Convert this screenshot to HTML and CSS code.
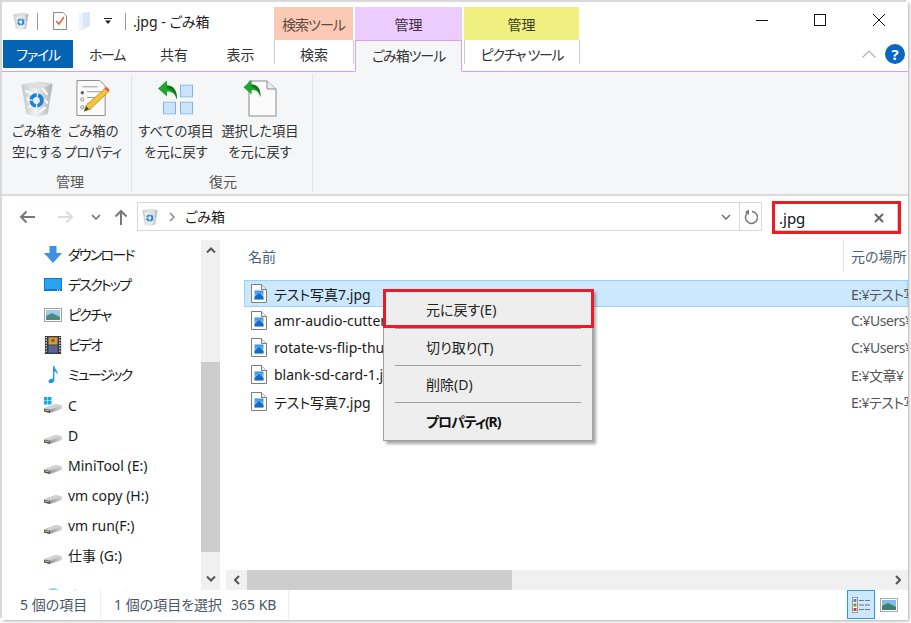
FILE: index.html
```html
<!DOCTYPE html>
<html lang="ja">
<head>
<meta charset="utf-8">
<title>.jpg - ごみ箱</title>
<link rel="stylesheet" href="styles.css">
</head>
<body>
<svg class="defs" width="0" height="0" aria-hidden="true">
  <defs>
    <linearGradient id="gBin" x1="0" y1="0" x2="1" y2="0"><stop offset="0" stop-color="#c2c6c9"/><stop offset=".45" stop-color="#f0f1f2"/><stop offset="1" stop-color="#adb1b5"/></linearGradient>
    <linearGradient id="gDrive" x1="0" y1="0" x2="1" y2="0"><stop offset="0" stop-color="#777"/><stop offset=".35" stop-color="#999"/><stop offset="1" stop-color="#d8d8d8"/></linearGradient>
    <linearGradient id="gSky" x1="0" y1="0" x2="0" y2="1"><stop offset="0" stop-color="#2f8fe6"/><stop offset="1" stop-color="#a9dcf5"/></linearGradient>
    <symbol id="bin" viewBox="0 0 32 38">
      <path d="M0 5 L16 1 L32 4 L27 35 L16 38 L5 35 Z" fill="url(#gBin)"/>
      <path d="M1 5.500 L16 2.500 L31 4.500 L16 9 Z" fill="#dcdee0"/>
      <path d="M4 11 L12 15 M21 8 L27 15 M7 28 L13 25 M18 33 L25 28 M6 18 L9 24 M24 20 L27 24" stroke="#fff" stroke-width="2" fill="none"/>
      <circle cx="15.500" cy="21" r="5.500" fill="none" stroke="#1b84d8" stroke-width="3.800" stroke-dasharray="7.500 1.500"/>
    </symbol>
    <symbol id="drive" viewBox="0 0 18 12">
      <path d="M0 6.500 L12 2 L18 3.500 L18 7 L6 11 L0 9.500 Z" fill="url(#gDrive)"/>
      <path d="M0 6.500 L12 2 L18 3.500 L6 7.500 Z" fill="#d2d2d2"/>
      <path d="M0 7 L6 8 L6 11 L0 9.500 Z" fill="#555"/>
      <path d="M1 8 L5 8.800" stroke="#9fdc8f" stroke-width="1"/>
    </symbol>
    <symbol id="imgfile" viewBox="0 0 16 19">
      <path d="M.5 .5 H10.500 L15.500 5.500 V18.500 H.5 Z" fill="#fff" stroke="#7d7d7d"/>
      <path d="M10.500 .5 V5.500 H15.500" fill="#eee" stroke="#7d7d7d"/>
      <rect x="3.500" y="6.500" width="9" height="9" fill="url(#gSky)"/>
      <path d="M3.500 13 L8 9 L12.500 13 V15.500 H3.500 Z" fill="#1668c8"/>
    </symbol>
    <symbol id="greenarrow" viewBox="0 0 20 20">
      <path d="M0 8 L9 0 V5 C15 5 19 9 19 19 C17 13 14 11 9 11 V16 Z" fill="#22a52e"/>
      <path d="M9 5 C15 5 19 9 19 19 C17 12 13 8 9 8 Z" fill="#0f7a1c"/>
    </symbol>
    <symbol id="bluesq" viewBox="0 0 13 13">
      <rect x=".5" y=".5" width="12" height="12" fill="#c9e3fb" stroke="#7fb4de"/>
    </symbol>
  </defs>
</svg>

<div class="window">
  <header class="titlebar">
    <div class="quick">
      <svg class="q-bin"><use href="#bin"/></svg>
      <span class="q-sep"></span>
      <svg class="q-check" viewBox="0 0 14 18"><path d="M.5 .5 H10 L13.500 4 V17.500 H.5 Z" fill="#fff" stroke="#8a8a8a"/><path d="M3 9 L6 12 L11 5" fill="none" stroke="#e8622a" stroke-width="1.600"/></svg>
      <svg class="q-folder" viewBox="0 0 12 18"><path d="M0 1 L11 0 V14 L3 18 H0 Z" fill="#dbe5f3"/><path d="M0 1 L4 1 V17 L0 18 Z" fill="#eef2f9"/></svg>
      <svg class="q-drop" viewBox="0 0 8 6"><path d="M0 0 H8 V1 H0 Z M1 2.500 H7 L4 6 Z" fill="#222"/></svg>
      <span class="q-sep q-sep2"></span>
      <span class="title-text">.jpg - ごみ箱</span>
    </div>
    <div class="ctx-head peach">検索ツール</div>
    <div class="ctx-head lilac">管理</div>
    <div class="ctx-head yellow">管理</div>
    <div class="winbtns">
      <span class="winbtn"><svg viewBox="0 0 12 12"><path d="M0 6.500 H12" stroke="#111"/></svg></span>
      <span class="winbtn"><svg viewBox="0 0 12 12"><rect x=".5" y=".5" width="11" height="11" fill="none" stroke="#111"/></svg></span>
      <span class="winbtn"><svg viewBox="0 0 12 12"><path d="M0 0 L12 12 M12 0 L0 12" stroke="#111"/></svg></span>
    </div>
  </header>

  <nav class="tabs">
    <span class="tab tab-file kana">ファイル</span>
    <span class="tab tab-home kana">ホーム</span>
    <span class="tab tab-share">共有</span>
    <span class="tab tab-view">表示</span>
    <span class="tab tab-search">検索</span>
    <span class="tab tab-active">ごみ箱ツール</span>
    <span class="tab tab-pic kana">ピクチャ ツール</span>
    <span class="tab-right">
      <svg class="collapse" viewBox="0 0 14 8"><path d="M.5 7.500 L7 1 L13.500 7.500" fill="none" stroke="#b0b0b0" stroke-width="1.200"/></svg>
      <span class="help">?</span>
    </span>
  </nav>

  <section class="ribbon">
    <div class="group group-a">
      <div class="group-btns">
        <div class="rb">
          <svg class="rb-icon bin-large"><use href="#bin"/></svg>
          <span>ごみ箱を<br>空にする</span>
        </div>
        <div class="rb">
          <svg class="rb-icon" viewBox="0 0 34 38">
            <path d="M.5 .5 H24 L29.500 6 V36.500 H.5 Z" fill="#fafafa" stroke="#8a8a8a"/>
            <path d="M6 7 H22 M11 12 H25 M11 18 H25 M11 24 H18 M11 30 H15" stroke="#9a9a9a"/>
            <circle cx="6" cy="13" r="1.800" fill="#666"/>
            <circle cx="6" cy="20" r="1.600" fill="none" stroke="#888"/>
            <circle cx="6" cy="28" r="1.600" fill="none" stroke="#888"/>
            <path d="M8 32 L10 26 L29 9 L33 12 L14 30 Z" fill="#f3c33a" stroke="#b98a14" stroke-width=".8"/>
            <path d="M29 9 L31 7 L34 10 L33 12 Z" fill="#e8584f"/>
            <path d="M8 32 L10 27 L13 30 Z" fill="#444"/>
          </svg>
          <span>ごみ箱の<br><span class="rb-kana">プロパティ</span></span>
        </div>
      </div>
      <div class="group-label">管理</div>
    </div>
    <div class="group group-b">
      <div class="group-btns">
        <div class="rb rb-wide">
          <svg class="rb-icon restore-all" viewBox="0 0 36 36">
            <use href="#greenarrow" x="0" y="0" width="20" height="20"/>
            <use href="#bluesq" x="22" y="4" width="13" height="13"/>
            <use href="#bluesq" x="5" y="21" width="13" height="13"/>
            <use href="#bluesq" x="22" y="21" width="13" height="13"/>
          </svg>
          <span>すべての項目<br>を元に戻す</span>
        </div>
        <div class="rb rb-wide">
          <svg class="rb-icon" viewBox="0 0 33 37">
            <path d="M5.500 1 H23.500 L32.500 9 V36 H5.500 Z" fill="#fbfbfb" stroke="#8a8a8a"/>
            <path d="M23.500 1 V9 H32.500" fill="#ececec" stroke="#8a8a8a"/>
            <use href="#greenarrow" x="0" y="0" width="18" height="18"/>
          </svg>
          <span>選択した項目<br>を元に戻す</span>
        </div>
      </div>
      <div class="group-label">復元</div>
    </div>
  </section>

  <div class="addressbar">
    <svg class="nav-arrow" viewBox="0 0 16 14"><path d="M16 7 H2 M7.500 1.500 L2 7 L7.500 12.500" fill="none" stroke="#777" stroke-width="2"/></svg>
    <svg class="nav-arrow nav-fwd" viewBox="0 0 16 14"><path d="M0 7 H14 M8.500 1.500 L14 7 L8.500 12.500" fill="none" stroke="#ddd" stroke-width="2"/></svg>
    <svg class="nav-drop" viewBox="0 0 10 6"><path d="M1 1 L5 5 L9 1" fill="none" stroke="#888" stroke-width="1.800"/></svg>
    <svg class="nav-up" viewBox="0 0 14 16"><path d="M7 16 V2 M1.500 7.500 L7 2 L12.500 7.500" fill="none" stroke="#777" stroke-width="2"/></svg>
    <div class="address">
      <svg class="addr-bin"><use href="#bin"/></svg>
      <svg class="addr-chev" viewBox="0 0 6 10"><path d="M1 1 L5 5 L1 9" fill="none" stroke="#888" stroke-width="1.500"/></svg>
      <span class="addr-text">ごみ箱</span>
      <svg class="addr-drop" viewBox="0 0 10 6"><path d="M1 1 L5 5 L9 1" fill="none" stroke="#666" stroke-width="1.300"/></svg>
      <span class="addr-refresh"><svg viewBox="0 0 14 16"><path d="M8 2.500 A6 6 0 1 1 3 4.500" fill="none" stroke="#777" stroke-width="1.500"/><path d="M5 .5 L5 6 L1 3 Z" fill="#777"/></svg></span>
    </div>
    <div class="search">
      <span class="search-text">.jpg</span>
      <svg class="search-x" viewBox="0 0 10 10"><path d="M1 1 L9 9 M9 1 L1 9" stroke="#666" stroke-width="2"/></svg>
    </div>
  </div>

  <main class="body">
    <aside class="side">
      <ul class="tree">
        <li class="item kana-item"><svg class="ti" viewBox="0 0 18 18"><path d="M5.500 0 H12.500 V7 H18 L9 17 L0 7 H5.500 Z" fill="#3d8fe0"/></svg>ダウンロード</li>
        <li class="item kana-item"><svg class="ti" viewBox="0 0 18 14"><rect width="18" height="13" fill="#0a78d4"/><rect x="1" y="1" width="16" height="10" fill="#2aa3f0"/><path d="M13 12 H17" stroke="#fff" stroke-dasharray="1 1"/></svg>デスクトップ</li>
        <li class="item kana-item"><svg class="ti" viewBox="0 0 18 14"><rect x=".5" y=".5" width="17" height="13" fill="#fff" stroke="#a0a0a0"/><rect x="2" y="2" width="14" height="10" fill="#9ecbe8"/><path d="M2 8 L8 5 L16 9 V12 H2 Z" fill="#4e8a80"/></svg>ピクチャ</li>
        <li class="item kana-item"><svg class="ti" viewBox="0 0 18 20"><rect width="18" height="20" fill="#3a3a3a"/><path d="M1.500 1 V19 M16.500 1 V19" stroke="#ddd" stroke-width="1.500" stroke-dasharray="1.500 1.500"/><rect x="4" y="1.500" width="10" height="8" fill="#c9a23a"/><rect x="4" y="10.500" width="10" height="8" fill="#3f6fb8"/><circle cx="9" cy="5" r="2" fill="#b8402c"/><circle cx="9" cy="14" r="2" fill="#b8402c"/></svg>ビデオ</li>
        <li class="item kana-item"><svg class="ti" viewBox="0 0 18 20"><path d="M9 0 H10.500 C11 4 15 5 14 10 C13.500 7 12 6.500 10.500 6 V16 C10.500 19 4 20.500 4 17 C4 14.500 7.500 13.500 9 14.500 Z" fill="#1b9bf0"/></svg>ミュージック</li>
        <li class="item item-c"><svg class="ti" viewBox="0 0 18 18"><g fill="#14a8f0"><rect width="3.500" height="3.500"/><rect x="4" width="3.500" height="3.500"/><rect y="4" width="3.500" height="3.500"/><rect x="4" y="4" width="3.500" height="3.500"/></g><use href="#drive" x="0" y="5" width="18" height="12"/></svg>C</li>
        <li class="item"><svg class="ti drive"><use href="#drive"/></svg>D</li>
        <li class="item"><svg class="ti drive"><use href="#drive"/></svg>MiniTool (E:)</li>
        <li class="item"><svg class="ti drive"><use href="#drive"/></svg>vm copy (H:)</li>
        <li class="item"><svg class="ti drive"><use href="#drive"/></svg>vm run(F:)</li>
        <li class="item"><svg class="ti drive"><use href="#drive"/></svg>仕事 (G:)</li>
        <li class="item item-net kana-item"><svg class="ti" viewBox="0 0 18 18"><circle cx="9" cy="9" r="8" fill="#9fd0e8"/><path d="M4 6 C7 3 9 8 6 10 Z" fill="#6fae7a"/></svg>ネットワーク</li>
      </ul>
      <div class="vscroll">
        <svg class="sb-arrow" viewBox="0 0 10 6"><path d="M1 5.500 L5 1.500 L9 5.500" fill="none" stroke="#555" stroke-width="2"/></svg>
        <div class="vtrack"><div class="vthumb"></div></div>
        <svg class="sb-arrow" viewBox="0 0 10 6"><path d="M1 .5 L5 4.500 L9 .5" fill="none" stroke="#555" stroke-width="2"/></svg>
      </div>
    </aside>
    <section class="pane">
      <div class="list-head">
        <span class="col-name">名前</span>
        <span class="col-loc">元の場所</span>
      </div>
      <div class="rows">
        <div class="row selected"><svg class="fi"><use href="#imgfile"/></svg><span class="name">テスト写真7.jpg</span><span class="loc">E:¥テスト写真</span></div>
        <div class="row"><svg class="fi"><use href="#imgfile"/></svg><span class="name">amr-audio-cutter.jpg</span><span class="loc">C:¥Users¥</span></div>
        <div class="row"><svg class="fi"><use href="#imgfile"/></svg><span class="name">rotate-vs-flip-thumbnail.jpg</span><span class="loc">C:¥Users¥</span></div>
        <div class="row"><svg class="fi"><use href="#imgfile"/></svg><span class="name">blank-sd-card-1.jpg</span><span class="loc">E:¥文章¥</span></div>
        <div class="row"><svg class="fi"><use href="#imgfile"/></svg><span class="name">テスト写真7.jpg</span><span class="loc">E:¥テスト写真</span></div>
      </div>
      <div class="hscroll">
        <span class="hbtn"><svg viewBox="0 0 6 10"><path d="M5 1 L1 5 L5 9" fill="none" stroke="#555" stroke-width="2"/></svg></span>
        <div class="hthumb"></div>
        <span class="hbtn hbtn-r"><svg viewBox="0 0 6 10"><path d="M1 1 L5 5 L1 9" fill="none" stroke="#555" stroke-width="2"/></svg></span>
      </div>
    </section>
  </main>

  <footer class="status">
    <span class="st-a">5 個の項目</span>
    <span class="st-b">1 個の項目を選択</span>
    <span class="st-c">365 KB</span>
    <span class="views">
      <span class="view view-on"><svg viewBox="0 0 18 16"><rect x=".5" y=".5" width="5" height="15" fill="#fff" stroke="#999"/><rect x="1.500" y="2" width="3" height="3" fill="#4a8ab0"/><rect x="1.500" y="6.500" width="3" height="3" fill="#8a8a30"/><rect x="1.500" y="11" width="3" height="3" fill="#b04a30"/><path d="M7 3.500 H12 M13 3.500 H18 M7 8 H12 M13 8 H18 M7 12.500 H12 M13 12.500 H18" stroke="#777"/></svg></span>
      <span class="view"><svg viewBox="0 0 18 14"><rect x=".5" y=".5" width="17" height="13" fill="#fff" stroke="#aaa"/><rect x="2" y="2" width="14" height="10" fill="#7fbde8"/><path d="M2 8 L8 5 L16 9 V12 H2 Z" fill="#3f7f70"/></svg></span>
    </span>
  </footer>

  <div class="menu">
    <div class="mi mi-hot">元に戻す(E)</div>
    <div class="msep"></div>
    <div class="mi">切り取り(T)</div>
    <div class="msep"></div>
    <div class="mi">削除(D)</div>
    <div class="msep"></div>
    <div class="mi mi-bold">プロパティ(R)</div>
  </div>
</div>
</body>
</html>
```
FILE: styles.css
```css
*, *::before, *::after { box-sizing: border-box; }
html, body { margin: 0; padding: 0; height: 100%; background: #fff; overflow: hidden; }
body { font-family: "Noto Sans", "Noto Sans CJK JP", sans-serif; font-size: 14px; color: #1a1a1a; font-feature-settings: "palt"; }
.defs { position: absolute; }
ul { list-style: none; margin: 0; padding: 0; }
svg { display: block; flex: none; }
.kana { letter-spacing: -1.300px; }

.window {
  position: relative;
  margin: 2px 0 0 2px;
  width: 906px;
  height: 618px;
  background: #fff;
  display: flex;
  flex-direction: column;
  box-shadow: -2px -2px 0 #d9d9d9, 1px 1px 3px #a8a8a8;
}

/* title bar */
.titlebar { height: 38px; display: flex; align-items: flex-end; flex: none; }
.quick { width: 272px; height: 38px; display: flex; align-items: center; padding: 0 0 0 11px; align-self: stretch; }
.q-bin { width: 16px; height: 18px; }
.q-sep { width: 1px; height: 17px; background: #9a9a9a; margin-left: 8px; }
.q-check { width: 14px; height: 18px; margin-left: 15px; }
.q-folder { width: 12px; height: 18px; margin-left: 12px; }
.q-drop { width: 8px; height: 6px; margin-left: 13px; }
.q-sep2 { margin-left: 13px; }
.title-text { margin-left: 7px; font-size: 14px; line-height: 20px; white-space: nowrap; padding-top: 2px; }
.ctx-head { height: 33px; margin-right: 2px; display: flex; align-items: center; justify-content: center; font-size: 14px; color: #444; }
.peach { width: 79px; background: #fcc9b4; color: #5c4c44; letter-spacing: -1px; }
.lilac { width: 107px; background: #eccbfd; color: #3c3040; }
.yellow { width: 115px; background: #f0f080; color: #3c3c20; }
.winbtns { margin-left: auto; display: flex; align-self: stretch; }
.winbtn { width: 58.500px; display: flex; align-items: center; justify-content: center; padding-bottom: 3px; }
.winbtn svg { width: 12px; height: 12px; }

/* tabs */
.tabs { height: 32px; flex: none; display: flex; border-bottom: 1px solid #dd9df0; font-size: 14px; color: #333; }
.tab { display: flex; align-items: center; justify-content: center; height: 28px; white-space: nowrap; }
.tab-file { width: 70px; margin-left: 1px; background: #0563b4; color: #fff; }
.tab-home { width: 68px; }
.tab-share { width: 66px; }
.tab-view { width: 67px; }
.tab-search { width: 80px; height: 24px; margin-top: 0; padding-top: 4px; border-left: 1px solid #ccc; border-right: 1px solid #ccc; }
.tab-active { width: 107px; height: 32px; margin-left: 1px; padding-bottom: 3px; background: #f5f6f7; border: 1px solid #dd9df0; border-bottom-color: #f5f6f7; letter-spacing: -1.100px; }
.tab-pic { width: 116px; height: 24px; margin-left: 2px; padding-top: 4px; border-left: 1px solid #ccc; border-right: 1px solid #ccc; }
.tab-right { margin-left: auto; display: flex; align-items: center; height: 31px; padding: 0 3px 4px 0; }
.collapse { width: 14px; height: 8px; margin-right: 9px; }
.help { width: 20px; height: 20px; border-radius: 50%; background: #0a66c0; color: #fff; font-weight: 700; font-size: 15px; line-height: 20px; text-align: center; }

/* ribbon */
.ribbon { height: 124px; flex: none; display: flex; background: #f5f6f7; border-bottom: 2px solid #dadbdc; padding-top: 2px; }
.group { display: flex; flex-direction: column; height: 118px; border-right: 1px solid #e2e3e5; }
.group-a { width: 130px; padding-left: 7px; }
.group-b { width: 181px; padding-left: 2px; }
.group-btns { display: flex; flex: 1; }
.group-label { height: 20px; line-height: 20px; text-align: center; color: #555; font-size: 14px; }
.rb { width: 56px; display: flex; flex-direction: column; align-items: center; text-align: center; line-height: 21px; color: #333; font-size: 13.300px; white-space: nowrap; padding-top: 6px; }
.rb-wide { width: 84px; }
.rb-icon { width: 34px; height: 37px; margin-bottom: 4px; }
.restore-all { width: 36px; }
.rb-kana { letter-spacing: -.5px; }

/* address */
.addressbar { height: 44px; flex: none; display: flex; align-items: flex-start; padding-top: 6px; }
.nav-arrow { width: 16px; height: 14px; margin: 8px 0 0 17px; }
.nav-fwd { margin-left: 23px; }
.nav-drop { width: 10px; height: 6px; margin: 12px 0 0 17px; }
.nav-up { width: 14px; height: 16px; margin: 7px 0 0 13px; }
.address { width: 625px; height: 29px; margin-left: 9px; border: 1px solid #d9d9d9; display: flex; align-items: center; padding-left: 4px; }
.addr-bin { width: 16px; height: 18px; }
.addr-chev { width: 6px; height: 10px; margin-left: 11px; }
.addr-text { margin-left: 10px; font-size: 14px; line-height: 20px; }
.addr-drop { width: 10px; height: 6px; margin-left: auto; margin-right: 8px; }
.addr-refresh { width: 22px; align-self: stretch; border-left: 1px solid #d9d9d9; display: flex; align-items: center; justify-content: center; }
.addr-refresh svg { width: 14px; height: 16px; }
.search { width: 129px; height: 33px; margin: -1px 0 0 10px; border: 3px solid #ed1c24; display: flex; align-items: center; padding: 0 14px 0 4px; box-shadow: inset 0 -1px 0 #ccc, inset -1px 0 0 #ccc; }
.search-text { font-size: 15px; line-height: 20px; color: #111; }
.search-x { width: 10px; height: 10px; margin-left: auto; }

/* body */
.body { height: 350px; flex: none; display: flex; }
.side { width: 220px; display: flex; height: 350px; flex: none; overflow: hidden; }
.tree { width: 199px; flex: none; height: 350px; overflow: hidden; }
.item { height: 30px; display: flex; align-items: center; padding-left: 42px; font-size: 14px; line-height: 20px; white-space: nowrap; color: #1a1a1a; }
.kana-item { letter-spacing: -1.800px; }
.item-c { margin-top: 1px; }
.item-net { margin-top: 10px; }
.ti { width: 18px; height: 18px; margin-right: 6px; }
.drive { height: 12px; margin-top: 6px; }
.vscroll { width: 19px; height: 350px; background: #f0f0f0; display: flex; flex-direction: column; align-items: center; }
.sb-arrow { width: 10px; height: 6px; margin: 7px 0 8px; flex: none; }
.vtrack { flex: 1; width: 100%; padding-top: 101px; }
.vthumb { height: 190px; background: #cdcdcd; }

.pane { flex: 1; min-width: 0; display: flex; flex-direction: column; overflow: hidden; }
.list-head { height: 32px; flex: none; display: flex; align-items: center; color: #4c607a; font-size: 14px; }
.col-name { width: 621px; padding-left: 26px; }
.col-loc { flex: 1; align-self: stretch; display: flex; align-items: center; white-space: nowrap; padding-left: 7px; border-left: 1px solid #e5e5e5; overflow: hidden; }
.rows { margin: 8px 0 0 22px; flex: 1; }
.row { height: 27px; display: flex; align-items: center; padding-left: 7px; font-size: 14px; white-space: nowrap; overflow: hidden; }
.selected { background: #cce8ff; box-shadow: inset 0 0 0 1px #99d1ff; }
.fi { width: 16px; height: 19px; }
.name { flex: none; width: 577px; margin-left: 7px; overflow: hidden; }
.loc { flex: none; font-size: 14px; color: #555; letter-spacing: -.5px; }
.hscroll { height: 20px; flex: none; margin-left: 4px; background: #f0f0f0; display: flex; }
.hbtn { width: 21px; display: flex; align-items: center; justify-content: center; }
.hbtn svg { width: 6px; height: 10px; }
.hbtn-r { margin-left: auto; }
.hthumb { width: 265px; background: #cdcdcd; }

/* status */
.status { height: 30px; flex: none; display: flex; align-items: center; color: #4a5568; font-size: 14px; padding-left: 18px; }
.st-a { flex: none; width: 81px; height: 100%; display: flex; align-items: center; border-right: 1px solid #ececec; padding-bottom: 2px; }
.st-b { flex: none; margin-left: 13px; width: 117px; padding-bottom: 2px; }
.st-c { flex: none; width: 58px; height: 100%; display: flex; align-items: center; border-right: 1px solid #ececec; padding-bottom: 2px; }
.views { margin-left: auto; display: flex; height: 29px; align-self: flex-start; padding-right: 5px; }
.view { width: 28px; display: flex; align-items: center; justify-content: center; }
.view-on { background: #cce8ff; border: 1px solid #26a0da; }
.view svg { width: 18px; height: 16px; }

/* context menu */
.menu {
  position: absolute;
  left: 381px;
  top: 287px;
  width: 210px;
  height: 152px;
  background: #eee;
  border: 1px solid #a0a0a0;
  box-shadow: 3px 3px 3px rgba(0,0,0,.35);
}
.mi { height: 36px; display: flex; align-items: center; padding-left: 42px; font-size: 14px; color: #222; white-space: nowrap; }
.msep { height: 1px; margin: 0 11px; background: #a0a0a0; }
.mi-hot { position: relative; height: 38px; }
.mi-hot::after { content: ""; position: absolute; left: -1px; top: -1px; width: 211px; height: 39px; border: 3px solid #ed1c24; }
.mi-bold { font-weight: 700; color: #111; letter-spacing: -1.100px; }
```
